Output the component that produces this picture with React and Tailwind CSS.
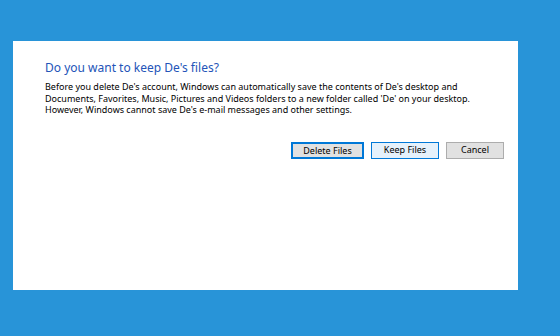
export default function App() {
  return (
    <div className="w-[560px] h-[336px] bg-[#2894d8] pt-[41px] pl-[13px]" style={{ fontFamily: '"Noto Sans", "Open Sans", sans-serif' }}>
      <div className="w-[505px] h-[249px] bg-white pl-[32px] pr-[14px] pt-[18px] flex flex-col">
        <h1 className="text-[12px] leading-[18px] text-[#2354b8]">Do you want to keep De's files?</h1>
        <p className="mt-[4px] text-[9px] leading-[11.5px] text-black">
          Before you delete De's account, Windows can automatically save the contents of De's desktop and
          <br />
          Documents, Favorites, Music, Pictures and Videos folders to a new folder called 'De' on your desktop.
          <br />
          However, Windows cannot save De's e-mail messages and other settings.
        </p>
        <div className="mt-[26px] flex justify-end gap-[7px] text-[9px] text-black">
          <button className="w-[73px] h-[17px] bg-[#e1e1e1] border-2 border-[#0078d7]">Delete Files</button>
          <button className="w-[68px] h-[17px] bg-[#e5f1fb] border border-[#0078d7]">Keep Files</button>
          <button className="w-[58px] h-[17px] bg-[#e1e1e1] border border-[#adadad]">Cancel</button>
        </div>
      </div>
    </div>
  );
}
